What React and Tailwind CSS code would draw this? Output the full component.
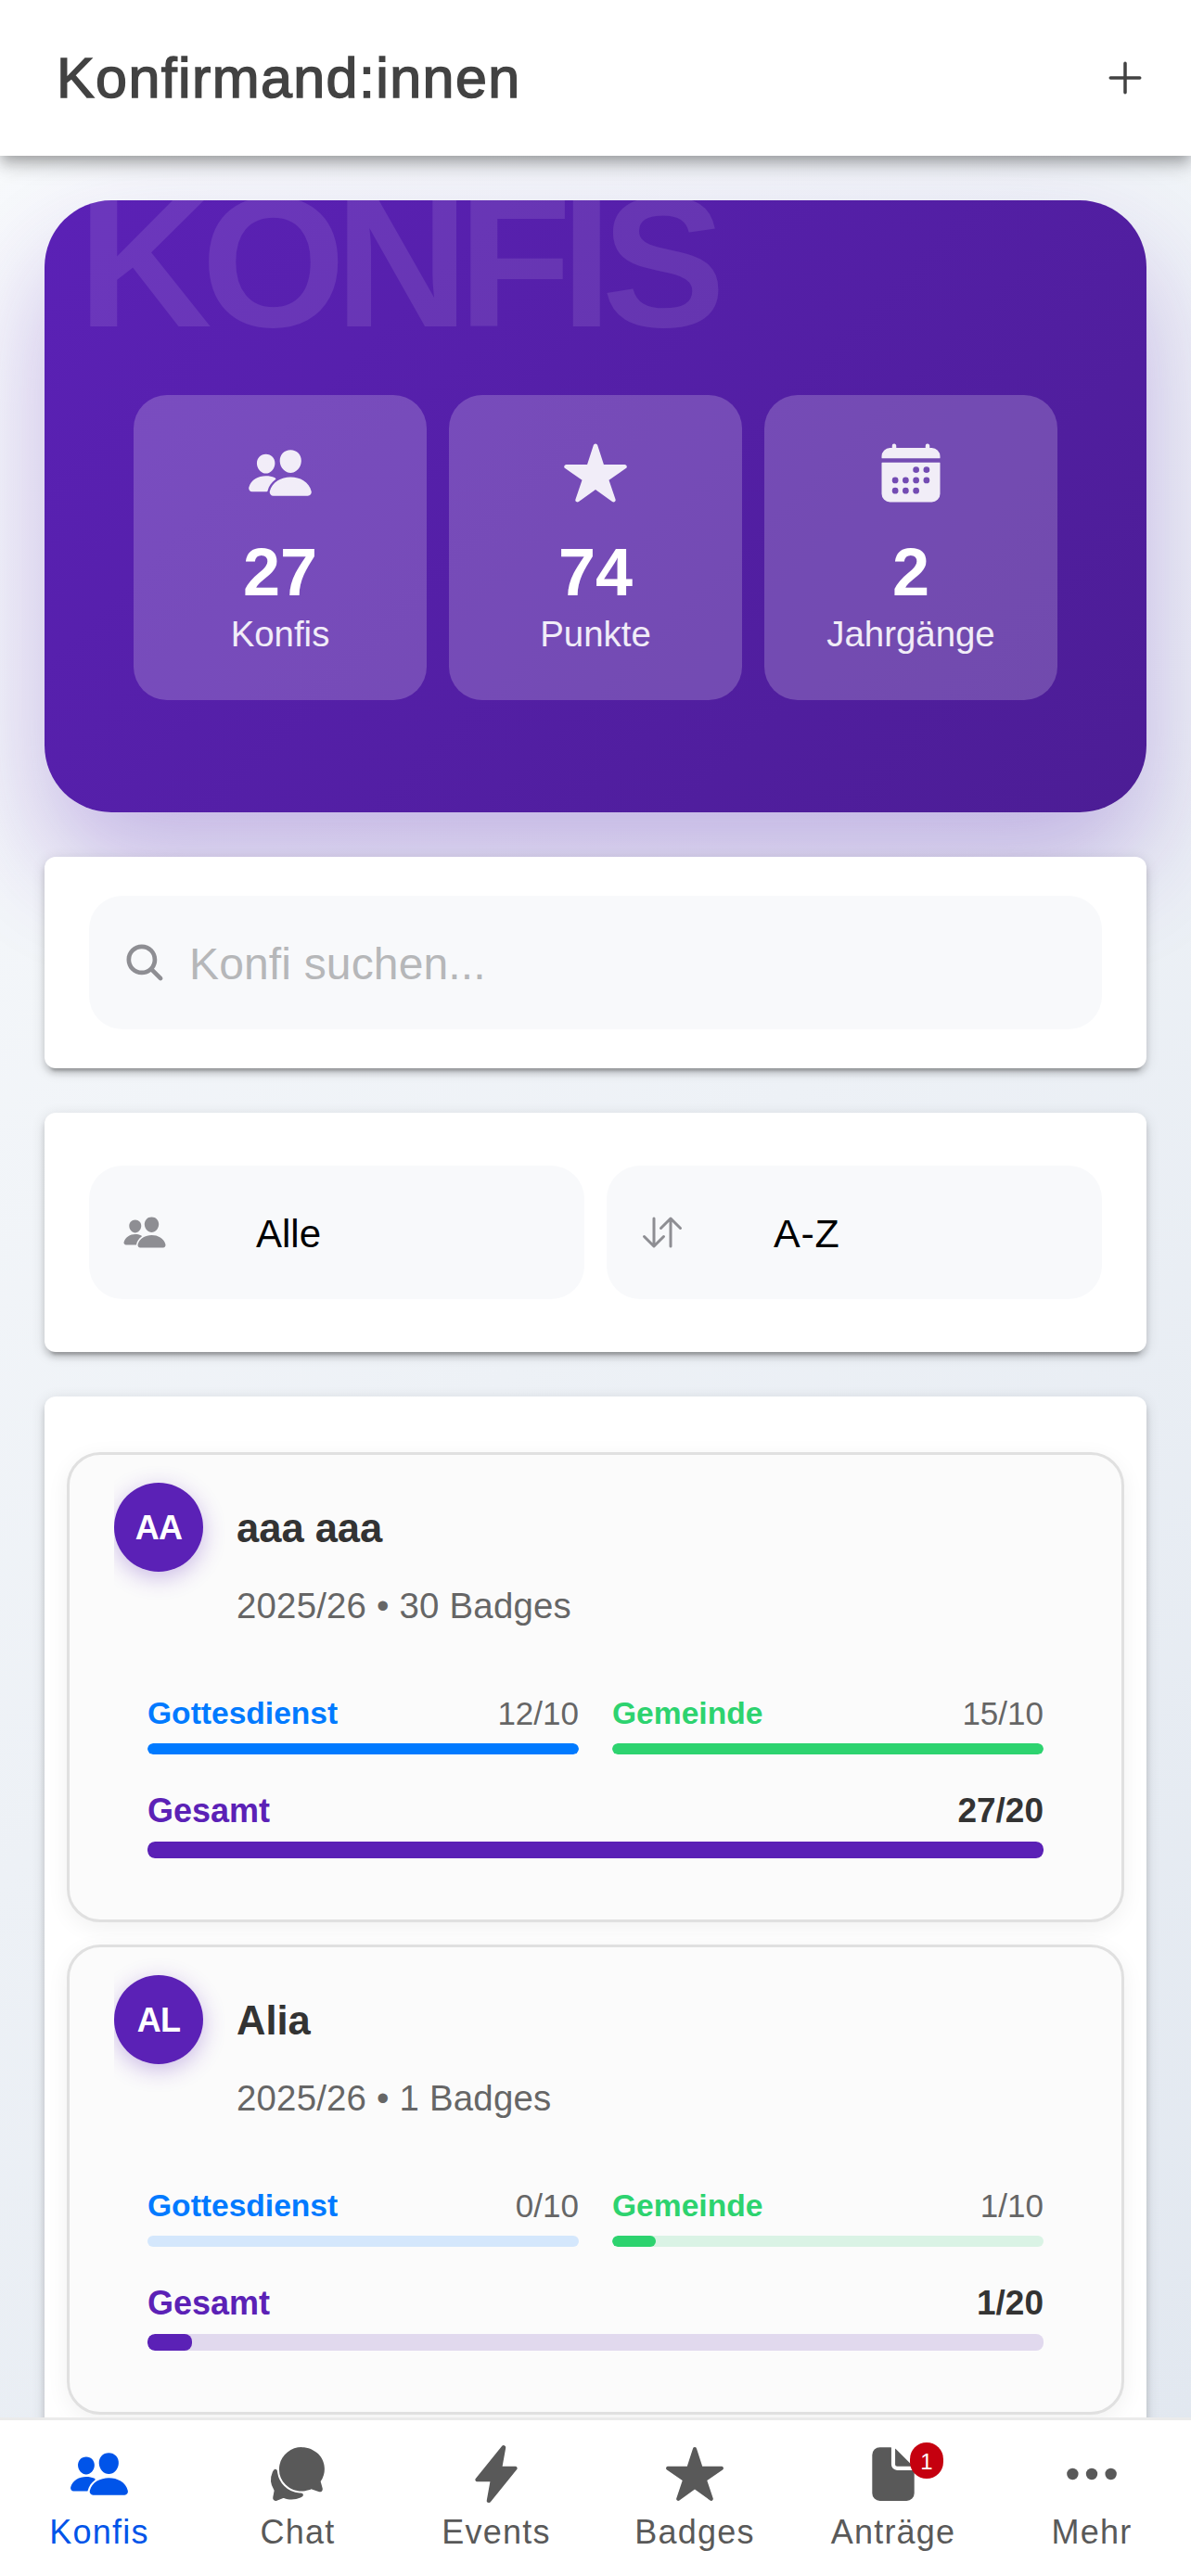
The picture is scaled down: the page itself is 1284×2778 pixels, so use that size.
import clsx from 'clsx'
import {
  IoAdd,
  IoCalendar,
  IoChatbubbles,
  IoDocument,
  IoEllipsisHorizontal,
  IoFlash,
  IoPeople,
  IoSearch,
  IoStar,
  IoSwapVertical,
} from 'react-icons/io5'

const stats = [
  { icon: IoPeople, value: 27, label: 'Konfis' },
  { icon: IoStar, value: 74, label: 'Punkte' },
  { icon: IoCalendar, value: 2, label: 'Jahrgänge' },
]

const konfis = [
  { name: 'aaa aaa', initials: 'AA', year: '2025/26', badges: 30, gottesdienst: 12, gemeinde: 15 },
  { name: 'Alia', initials: 'AL', year: '2025/26', badges: 1, gottesdienst: 0, gemeinde: 1 },
]

const tabs = [
  { icon: IoPeople, label: 'Konfis', active: true },
  { icon: IoChatbubbles, label: 'Chat' },
  { icon: IoFlash, label: 'Events' },
  { icon: IoStar, label: 'Badges' },
  { icon: IoDocument, label: 'Anträge', badge: 1 },
  { icon: IoEllipsisHorizontal, label: 'Mehr' },
]

const Card = ({ className, children }) => (
  <section
    className={clsx(
      'bg-white rounded-xl shadow-[0_9px_3px_-6px_rgba(0,0,0,0.2),0_6px_6px_0_rgba(0,0,0,0.14),0_3px_15px_0_rgba(0,0,0,0.12)]',
      className
    )}
  >
    {children}
  </section>
)

const Bar = ({ value, max, track, fill, height }) => (
  <div className={clsx('w-full rounded-[8px] overflow-hidden', height, track)}>
    <div
      className={clsx('h-full rounded-[8px]', fill)}
      style={{ width: `${Math.min(100, (value / max) * 100)}%` }}
    />
  </div>
)

const Points = ({ label, value, max, color, track, fill }) => (
  <div className="flex-1">
    <div className="flex items-center justify-between h-[42px] mb-[11px] leading-[42px]">
      <span className={clsx('text-[33.6px] font-bold', color)}>{label}</span>
      <span className="text-[35px] text-[#666]">{value}/{max}</span>
    </div>
    <Bar value={value} max={max} track={track} fill={fill} height="h-3" />
  </div>
)

const KonfiItem = ({ konfi }) => {
  const total = konfi.gottesdienst + konfi.gemeinde

  return (
    <div className="h-[507px] bg-[#fbfbfb] border-[3px] border-[#e0e0e0] rounded-[36px] px-12 pt-[30px] shadow-[0_6px_24px_rgba(0,0,0,0.06)]">
      <div className="flex gap-9">
        <div className="[clip-path:inset(-48px_-48px_-60px_0)]">
          <div className="size-24 rounded-full bg-[#5b21b6] text-white text-[36px] font-bold flex items-center justify-center pt-0.5 tracking-[-0.8px] shadow-[0_6px_24px_rgba(91,33,182,0.3)]">
            {konfi.initials}
          </div>
        </div>
        <div className="pt-[22px]">
          <h3 className="text-[43.5px] leading-[54px] font-bold text-[#333]">{konfi.name}</h3>
          <p className="mt-[33px] text-[38.4px] leading-[48px] tracking-[0.2px] text-[#666]">
            {konfi.year} • {konfi.badges} Badges
          </p>
        </div>
      </div>

      <div className="mt-[71px] px-9">
        <div className="flex gap-9">
          <Points label="Gottesdienst" value={konfi.gottesdienst} max={10} color="text-[#007aff]" track="bg-[#d4e7fc]" fill="bg-[#007aff]" />
          <Points label="Gemeinde" value={konfi.gemeinde} max={10} color="text-[#2dd36f]" track="bg-[#daf3e5]" fill="bg-[#2dd36f]" />
        </div>
        <div className="mt-[37px] flex items-center justify-between text-[36px] leading-[48px] font-bold">
          <span className="text-[#5b21b6]">Gesamt</span>
          <span className="text-[37px] text-[#333]">{total}/20</span>
        </div>
        <div className="mt-[9px]">
          <Bar value={total} max={20} track="bg-[#e1d9ee]" fill="bg-[#5b21b6]" height="h-[18px]" />
        </div>
      </div>
    </div>
  )
}

const App = () => {
  return (
    <div className="w-[1284px] h-[2778px] flex flex-col overflow-hidden bg-white font-['Liberation_Sans',Arial,sans-serif]">

      {/* ── Header ── */}
      <header className="relative z-10 h-[168px] shrink-0 bg-white flex items-center justify-between pl-[61px] pr-[43px] shadow-[0_6px_12px_-3px_rgba(0,0,0,0.2),0_12px_15px_0_rgba(0,0,0,0.14),0_3px_30px_0_rgba(0,0,0,0.12)]">
        <h1 className="pt-px text-[61px] tracking-[1.4px] text-[#424242] [-webkit-text-stroke:1.5px_#424242]">Konfirmand:innen</h1>
        <IoAdd className="size-14 text-[#424242]" />
      </header>

      {/* ── Content ── */}
      <main className="flex-1 min-h-0 overflow-hidden px-12 pt-12 flex flex-col gap-12 bg-[linear-gradient(135deg,#f8fafc_0%,#e2e8f0_100%)]">

        {/* Hero */}
        <section className="relative h-[660px] shrink-0 rounded-[72px] bg-[linear-gradient(135deg,#5b21b6_0%,#4c1d95_100%)] shadow-[0_60px_120px_rgba(91,33,182,0.3)]">
          <div className="absolute inset-0 rounded-[72px] overflow-hidden">
            <span className="absolute left-[36px] -top-[29px] text-[200px] leading-[192px] tracking-[-11.5px] font-bold text-white/10">
              KONFIS
            </span>
          </div>
          <div className="relative pt-[210px] px-24 flex gap-6">
            {stats.map((s) => (
              <div key={s.label} className="flex-1 h-[329px] rounded-[36px] bg-white/20 text-white flex flex-col items-center pt-12">
                <s.icon className="size-[72px] text-white/90" />
                <span className="mt-[35px] text-[72px] leading-[72px] font-bold">{s.value}</span>
                <span className="mt-[7px] text-[38.4px] leading-[48px] text-white/90">{s.label}</span>
              </div>
            ))}
          </div>
        </section>

        {/* Search */}
        <Card className="relative shrink-0 px-12 py-[42px]">
          <div className="h-36 rounded-[36px] bg-[#f8f9fb] px-9 flex items-center">
            <IoSearch className="size-12 text-[#8e8e93]" />
            <span className="ml-6 pt-[3px] text-[48px] tracking-[0.15px] text-[#b6b7b9]">Konfi suchen...</span>
          </div>
        </Card>

        {/* Filter + sort */}
        <Card className="shrink-0 px-12 py-[57px] flex gap-6">
          <div className="flex-1 h-36 rounded-[36px] bg-[#f8f9fb] px-9 flex items-center text-[#8e8e93]">
            <IoPeople className="size-12" />
            <span className="ml-24 pt-0.5 text-[42px] text-black">Alle</span>
          </div>
          <div className="flex-1 h-36 rounded-[36px] bg-[#f8f9fb] px-9 flex items-center text-[#8e8e93]">
            <IoSwapVertical className="size-12" />
            <span className="ml-24 pt-0.5 text-[43px] tracking-[0.8px] text-black">A-Z</span>
          </div>
        </Card>

        {/* List */}
        <Card className="shrink-0 h-[1300px] px-6 pt-[60px] flex flex-col gap-6">
          {konfis.map((k) => (
            <KonfiItem key={k.name} konfi={k} />
          ))}
        </Card>
      </main>

      {/* ── Tab bar ── */}
      <nav className="relative z-10 h-[171px] shrink-0 bg-white border-t-[3px] border-[#ebebeb] flex">
        {tabs.map((t) => (
          <div
            key={t.label}
            className={clsx('flex-1 flex flex-col items-center pt-[25px]', t.active ? 'text-[#0054e9]' : 'text-[#595959]')}
          >
            <div className="relative">
              <t.icon className="size-[66px]" />
              {t.badge && (
                <span className="absolute left-[51px] -top-px w-9 h-[39px] rounded-full bg-[#c5000f] text-white text-[24px] flex items-center justify-center pt-0.5">
                  {t.badge}
                </span>
              )}
            </div>
            <span className="mt-[9px] text-[36px] leading-[42px] tracking-[1.2px]">{t.label}</span>
          </div>
        ))}
      </nav>
    </div>
  )
}

export default App
